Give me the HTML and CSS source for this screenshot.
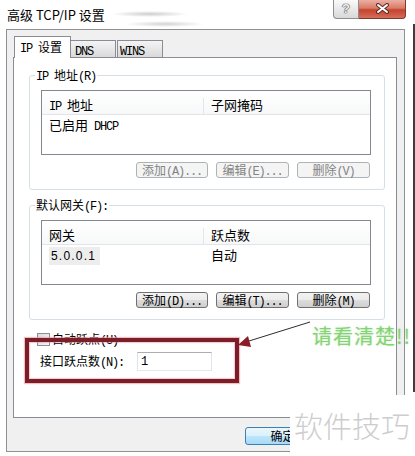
FILE: index.html
```html
<!DOCTYPE html>
<html lang="zh-CN">
<head>
    <meta charset="UTF-8">
    <meta name="viewport" content="width=device-width, initial-scale=1.0">
    <title>高级 TCP/IP 设置</title>
    <link rel="stylesheet" href="styles.css">
</head>
<body>
<div class="screen">

    <div class="window">
        <div class="titlebar">
            <span class="title">高级 TCP/IP 设置</span>
            <div class="caption">
                <span class="cap-help">?</span>
                <span class="cap-close">
                    <svg width="15" height="11" viewBox="0 0 15 11">
                        <path d="M3 2 L12 9 M12 2 L3 9" stroke="#5b2b25" stroke-width="4" stroke-linecap="round" fill="none"/>
                        <path d="M3 2 L12 9 M12 2 L3 9" stroke="#fff" stroke-width="2" stroke-linecap="round" fill="none"/>
                    </svg>
                </span>
            </div>
        </div>

        <div class="dialog">
            <div class="tabs">
                <span class="tab active"><span class="lat">IP </span>设置</span>
                <span class="tab dns"><span class="lat">DNS</span></span>
                <span class="tab wins"><span class="lat">WINS</span></span>
            </div>

            <div class="panel">
                <!-- IP addresses -->
                <div class="group">
                    <div class="group-title"><span class="lat">IP </span>地址<span class="lat">(R)</span></div>
                    <div class="list">
                        <div class="list-head">
                            <span><span class="lat">IP </span>地址</span>
                            <span>子网掩码</span>
                        </div>
                        <div class="list-row">
                            <span>已启用<span class="lat"> DHCP</span></span>
                            <span></span>
                        </div>
                    </div>
                    <div class="buttons">
                        <button class="btn" disabled>添加<span class="lat">(A)...</span></button>
                        <button class="btn" disabled>编辑<span class="lat">(E)...</span></button>
                        <button class="btn" disabled>删除<span class="lat">(V)</span></button>
                    </div>
                </div>

                <!-- Default gateways -->
                <div class="group gateways">
                    <div class="group-title">默认网关<span class="lat">(F):</span></div>
                    <div class="list">
                        <div class="list-head">
                            <span>网关</span>
                            <span>跃点数</span>
                        </div>
                        <div class="list-row">
                            <span><span class="ip">5.0.0.1</span></span>
                            <span>自动</span>
                        </div>
                    </div>
                    <div class="buttons">
                        <button class="btn">添加<span class="lat">(D)...</span></button>
                        <button class="btn">编辑<span class="lat">(T)...</span></button>
                        <button class="btn">删除<span class="lat">(M)</span></button>
                    </div>
                </div>

                <label class="check-row">
                    <input type="checkbox" class="check">
                    <span>自动跃点<span class="lat">(U)</span></span>
                </label>

                <div class="metric-row">
                    <span class="metric-label">接口跃点数<span class="lat">(N):</span></span>
                    <input type="text" class="metric-input" value="1">
                </div>
            </div>

            <div class="footer">
                <button class="ok">确定</button>
            </div>
        </div>
    </div>

    <div class="edge"></div>

    <!-- annotations drawn over the screenshot -->
    <div class="highlight"></div>
    <svg class="arrow" width="415" height="456" viewBox="0 0 415 456">
        <line x1="310" y1="322" x2="249" y2="341" stroke="#2e2e2e" stroke-width="1"/>
        <polygon points="238,345 251,347 248,336" fill="#8a1d27"/>
    </svg>
    <span class="note">请看清楚!!</span>
    <div class="watermark">软件技巧</div>
</div>
</body>
</html>
```

FILE: styles.css
```css
* {
    box-sizing: border-box;
}

body {
    margin: 0;
    width: 415px;
    height: 456px;
    overflow: hidden;
    background: #fff;
    color: #000;
    font-family: "Noto Sans CJK SC", sans-serif;
    font-size: 12px;
    line-height: 14px;
}

.lat {
    font-family: "Liberation Mono", monospace;
    font-size: 12px;
    letter-spacing: -1.2px;
    white-space: pre;
}

.screen {
    position: relative;
    width: 415px;
    height: 456px;
    display: flex;
}

.window {
    width: 413px;
}

.edge {
    width: 2px;
    height: 368px;
    margin-top: 24px;
    background: #3d3d3d;
}

/* Title bar */
.titlebar {
    height: 29px;
    display: flex;
    justify-content: space-between;
    align-items: flex-start;
    padding: 0 7px 0 7px;
    background:
        radial-gradient(ellipse 38px 3px at 150px 14px, rgba(110, 110, 110, 0.35), transparent),
        radial-gradient(ellipse 40px 3px at 165px 24px, rgba(110, 110, 110, 0.3), transparent),
        #fff;
}

.title {
    margin-top: 7px;
    font-size: 13px;
    line-height: 16px;
}

.caption {
    display: flex;
}

.cap-help {
    width: 26px;
    height: 19px;
    border: 1px solid #8e8e8e;
    border-top: none;
    border-radius: 0 0 0 4px;
    background: linear-gradient(#fafafa, #e9e9e9 50%, #d8d8d8);
    text-align: center;
    font-family: "Liberation Sans", sans-serif;
    font-size: 13px;
    font-weight: bold;
    line-height: 18px;
    color: #f2f2f2;
    text-shadow: 0 0 1px #444, 0 0 1px #444, 0 0 1px #444;
}

.cap-close {
    width: 47px;
    height: 19px;
    border: 1px solid #7d3a31;
    border-top: none;
    border-left: none;
    border-radius: 0 0 4px 0;
    background: linear-gradient(#eab0a3, #db7a66 45%, #c5432d 55%, #d56d5a);
    display: flex;
    justify-content: center;
    align-items: center;
    padding-bottom: 2px;
}

/* Dialog body */
.dialog {
    margin-left: 6px;
    width: 399px;
    height: 423px;
    border: 1px solid #8f9193;
    background: #f0f0f0;
    display: flex;
    flex-direction: column;
}

.tabs {
    display: flex;
    align-items: flex-end;
    height: 21px;
    margin-top: 6px;
    padding-left: 7px;
}

.tab {
    height: 17px;
    border: 1px solid #898c95;
    border-bottom: none;
    padding: 2px 0 0 4px;
    background: linear-gradient(#f4f4f4, #e7e7e7 50%, #d9d9d9);
}

.tab.active {
    position: relative;
    z-index: 1;
    width: 57px;
    height: 22px;
    margin-bottom: -1px;
    padding: 3px 0 0 5px;
    background: #fff;
}

.tab.dns {
    width: 46px;
    margin-left: -1px;
}

.tab.wins {
    width: 46px;
    margin-left: 1px;
    padding-left: 2px;
}

.panel {
    margin-left: 6px;
    width: 384px;
    height: 361px;
    border: 1px solid #898c95;
    background: #fff;
}

/* Group boxes */
.group {
    margin: 17px 0 0 15px;
    width: 356px;
    border: 1px solid #d5dfe5;
    border-radius: 3px;
    padding: 0 13px 11px 11px;
}

.group.gateways {
    margin-top: 15px;
}

.group-title {
    width: fit-content;
    margin: -8px 0 0 -6px;
    padding: 0 1px;
    background: #fff;
}

.list {
    margin-top: 6px;
    height: 65px;
    border: 1px solid #828790;
}

.list-head,
.list-row {
    display: grid;
    grid-template-columns: 162px 1fr;
}

.list-head {
    height: 24px;
    padding-top: 7px;
    border-bottom: 1px solid #e3e4e6;
    background: linear-gradient(#fff, #f7f8f9);
    font-size: 13px;
}

.list-head > span:first-child {
    border-right: 1px solid #e3e5e8;
}

.list-head > span,
.list-row > span {
    padding-left: 7px;
}

.list-row {
    padding-top: 3px;
    font-size: 13px;
}

.list-row .ip {
    padding: 2px 4px 2px 2px;
    background: #ededed;
    font-family: "Liberation Sans", sans-serif;
    font-size: 12px;
    letter-spacing: 1.2px;
}

.buttons {
    display: flex;
    justify-content: flex-end;
    gap: 8px;
    margin-top: 7px;
    padding-right: 1px;
}

.btn {
    width: 73px;
    height: 16px;
    padding: 0;
    border: 1px solid #707070;
    border-radius: 3px;
    background: linear-gradient(#f2f2f2, #ebebeb 50%, #dddddd 50%, #cfcfcf);
    color: #000;
    font-family: inherit;
    font-size: 12px;
    line-height: 14px;
}

.btn:first-child {
    width: 72px;
}

.btn:disabled {
    border-color: #adb2b5;
    background: #f4f4f4;
    color: #838383;
}

/* Metric options */
.check-row {
    display: flex;
    align-items: center;
    gap: 2px;
    margin: 13px 0 0 23px;
    height: 13px;
}

.check {
    appearance: none;
    margin: 0;
    width: 13px;
    height: 13px;
    border: 1px solid #8e8f8f;
    background: linear-gradient(135deg, #dcdcdc, #f6f6f6);
}

.metric-row {
    display: flex;
    align-items: center;
    margin: 6px 0 0 26px;
}

.metric-label {
    width: 97px;
}

.metric-input {
    width: 75px;
    height: 19px;
    border: 1px solid #abadb3;
    border-left-color: #e2e3ea;
    border-right-color: #e2e3ea;
    border-bottom-color: #e3e9ef;
    padding: 0 0 0 3px;
    font-family: "Liberation Mono", monospace;
    font-size: 12px;
    color: #000;
}

/* Bottom buttons */
.footer {
    flex: 1;
    padding: 9px 0 0 238px;
}

.ok {
    width: 75px;
    height: 18px;
    padding: 0;
    border: 1px solid #3c7fb1;
    border-radius: 3px;
    background: linear-gradient(#eaf6fd, #d9f0fc 50%, #bee6fd 50%, #a7d9f5);
    font-family: inherit;
    font-size: 12px;
    line-height: 14px;
}

/* Annotations */
.highlight {
    position: absolute;
    left: 25px;
    top: 338px;
    width: 214px;
    height: 45px;
    border: 4px solid #7c1e27;
    box-shadow: 0 0 1px 1px rgba(230, 150, 160, 0.6), inset 0 0 1px 1px rgba(230, 150, 160, 0.5);
}

.arrow {
    position: absolute;
    left: 0;
    top: 0;
}

.note {
    position: absolute;
    left: 312px;
    top: 325px;
    font-size: 20px;
    line-height: 22px;
    letter-spacing: 1px;
    color: #86d276;
    text-shadow: 0 0 2px rgba(140, 220, 120, 0.5);
    white-space: nowrap;
}

.watermark {
    position: absolute;
    left: 290px;
    top: 395px;
    width: 125px;
    height: 61px;
    padding-left: 4px;
    background: #fff;
    color: #cdcdcd;
    font-size: 29px;
    font-weight: 300;
    line-height: 61px;
    white-space: nowrap;
}
```
